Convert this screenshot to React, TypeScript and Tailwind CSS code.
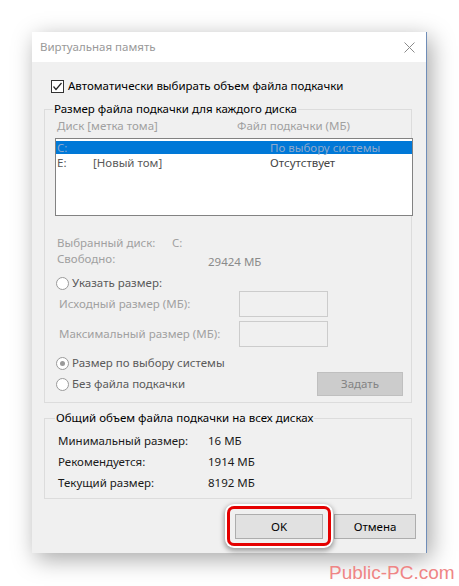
// Virtual memory settings dialog (Windows 10 style)

const muted = 'text-[#a0a0a0]';

function Radio({ checked = false, label }: { checked?: boolean; label: string }) {
  return (
    <div className="flex items-center h-[16px]">
      <span className="w-[13px] h-[13px] rounded-full border border-[#9a9a9a] bg-white flex items-center justify-center">
        {checked && <span className="w-[5px] h-[5px] rounded-full bg-[#9a9a9a]" />}
      </span>
      <span className="ml-[3px] text-[#5a5a5a]">{label}</span>
    </div>
  );
}

function SizeInput({ label, className }: { label: string; className?: string }) {
  return (
    <div className={`flex items-center h-[26px] ${className ?? ''}`}>
      <span className={`w-[183px] pl-[3px] ${muted}`}>{label}</span>
      <div className="w-[89px] h-[26px] border border-[#cccccc] bg-[#f0f0f0]" />
    </div>
  );
}

export default function App() {
  return (
    <div className="relative w-[459px] h-[586px] bg-white pl-[32px] pt-[32px] font-['Noto_Sans',sans-serif] text-[11.5px] leading-[16px]">
      <div className="w-[395px] h-[521px] bg-[#f0f0f0] border-r border-[#6f8db8] shadow-[4px_6px_22px_rgba(0,0,0,0.35)] flex flex-col">
        {/* Title bar */}
        <div className="h-[30px] bg-white flex items-center justify-between pl-[8px] pr-[10px]">
          <span className="text-[#999999]">Виртуальная память</span>
          <svg width="11" height="11" viewBox="0 0 11 11" className="mr-[1px]">
            <path d="M0.5 0.5 L10.5 10.5 M10.5 0.5 L0.5 10.5" stroke="#8a8a8a" strokeWidth="1" />
          </svg>
        </div>

        <div className="flex flex-col pl-[12px] pr-[14px]">
          {/* Auto-manage checkbox */}
          <div className="flex items-center h-[16px] mt-[16px] pl-[7px]">
            <span className="w-[13px] h-[13px] border border-[#333333] bg-white flex items-center justify-center">
              <svg width="11" height="11" viewBox="0 0 11 11">
                <path d="M1.5 5.5 L4 8.5 L9.5 2" stroke="#222" strokeWidth="1.2" fill="none" />
              </svg>
            </span>
            <span className="ml-[4px] text-black">Автоматически выбирать объем файла подкачки</span>
          </div>

          {/* Per-drive paging file */}
          <fieldset className="mt-[7px] border border-[#dcdcdc] pl-[11px] pr-0 pb-[6px]">
            <legend className="ml-[-3px] px-[1px] text-black">Размер файла подкачки для каждого диска</legend>
            <div className={`flex h-[16px] mt-[1px] ${muted}`}>
              <span className="w-[181px] pl-[1px]">Диск [метка тома]</span>
              <span>Файл подкачки (МБ)</span>
            </div>
            <div className="mt-[4px] ml-[-1px] mr-[-2px] h-[78px] border border-[#828282] bg-white pt-[2px]">
              <div className="flex h-[13px] items-center bg-[#0078d7] text-[#8fa9cc]">
                <span className="w-[214px] pl-[1px]">C:</span>
                <span>По выбору системы</span>
              </div>
              <div className="flex h-[18px] items-center text-[#5a5a5a]">
                <span className="w-[37px] pl-[1px]">E:</span>
                <span className="w-[177px]">[Новый том]</span>
                <span className="text-[#444444]">Отсутствует</span>
              </div>
            </div>

            <div className={`flex h-[16px] mt-[19px] pl-[1px] ${muted}`}>
              <span className="w-[115px]">Выбранный диск:</span>
              <span>C:</span>
            </div>
            <div className={`flex h-[16px] pl-[1px] ${muted}`}>
              <span className="w-[151px]">Свободно:</span>
              <span className="mt-[3px] text-[#8a8a8a]">29424 МБ</span>
            </div>

            <div className="mt-[8px]">
              <Radio label="Указать размер:" />
            </div>
            <SizeInput label="Исходный размер (МБ):" />
            <SizeInput label="Максимальный размер (МБ):" className="mt-[4px]" />
            <div className="mt-[8px]">
              <Radio checked label="Размер по выбору системы" />
            </div>
            <div className="flex items-center justify-between h-[24px] mt-[1px] pr-[8px]">
              <Radio label="Без файла подкачки" />
              <div className="w-[86px] h-[24px] bg-[#cccccc] border border-[#bfbfbf] flex items-center justify-center text-[#838383]">
                Задать
              </div>
            </div>
          </fieldset>

          {/* Totals for all drives */}
          <fieldset className="mt-[7px] border border-[#dcdcdc] pl-[13px] pb-[5px]">
            <legend className="ml-[-3px] px-[1px] text-black">Общий объем файла подкачки на всех дисках</legend>
            <div className="mt-[4px] flex flex-col text-[#1a1a1a]">
              {[
                ['Минимальный размер:', '16 МБ'],
                ['Рекомендуется:', '1914 МБ'],
                ['Текущий размер:', '8192 МБ'],
              ].map(([k, v]) => (
                <div key={k} className="flex items-center h-[21px]">
                  <span className="w-[150px]">{k}</span>
                  <span>{v}</span>
                </div>
              ))}
            </div>
          </fieldset>

          {/* Dialog buttons */}
          <div className="flex justify-end gap-[11px] mt-[15px] mr-[-4px]">
            <div className="relative">
              <div className="w-[88px] h-[25px] bg-[#e1e1e1] border border-[#adadad] flex items-center justify-center text-black">
                OK
              </div>
              <div className="absolute -left-[8px] -top-[8px] -right-[8px] -bottom-[7px] rounded-[7px] border-[3px] border-[#e50000] shadow-[0_0_0_2px_#ffffff,0_2px_5px_3px_rgba(0,0,0,0.35)]" />
            </div>
            <div className="w-[82px] h-[25px] bg-[#e1e1e1] border border-[#adadad] flex items-center justify-center text-black">
              Отмена
            </div>
          </div>
        </div>
      </div>

      <span className="absolute left-[329px] top-[561px] font-['Liberation_Sans',sans-serif] text-[19px] leading-[24px] text-[#ef8585]">
        Public-PC.com
      </span>
    </div>
  );
}
